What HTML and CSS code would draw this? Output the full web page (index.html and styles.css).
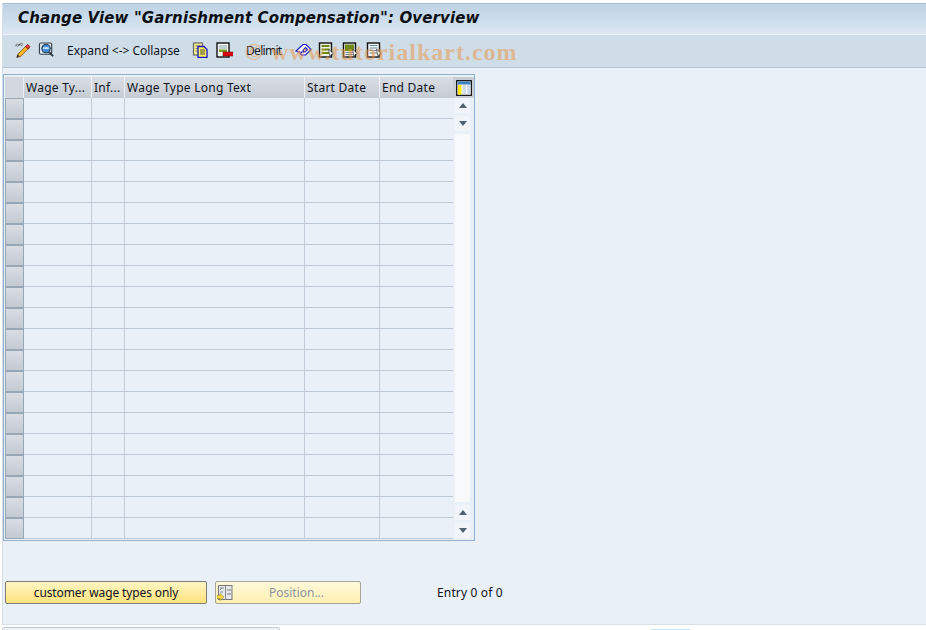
FILE: index.html
```html
<!DOCTYPE html>
<html lang="en">
<head>
<meta charset="utf-8">
<title>Change View "Garnishment Compensation": Overview</title>
<link rel="stylesheet" href="styles.css">
</head>
<body>
<div class="screen">
  <div class="window">
    <header class="titlebar"><h1 class="title">Change View "Garnishment Compensation": Overview</h1></header>
    <div class="toolbar">
      <svg class="icon" viewBox="0 0 17 17"><path d="M1 4.500l2-2 1.500 1.500 1.500-2 2 2" fill="none" stroke="#333" stroke-width="1"/><path d="M3 4.500a1.200 1.200 0 1 1 .1 0zM7 3.500a1.200 1.200 0 1 1 .1 0z" fill="#fff" stroke="#444" stroke-width=".8"/><path d="M3.500 13l9-9 3 2.500-9 9-4 1z" fill="#f7b52c" stroke="#7a4a10" stroke-width=".8"/><path d="M11.500 5l2.500-2.500 2.500 2.500-2 2.500z" fill="#e23b3b" stroke="#7a1010" stroke-width=".7"/><path d="M3.500 13l-1.500 3.500 3.500-1z" fill="#333"/></svg>
      <svg class="icon icon-gap-s" viewBox="0 0 17 17"><rect x="1" y="1" width="13" height="12" rx="1.500" fill="#dfe6ee" stroke="#33424f" stroke-width="1.200"/><circle cx="8" cy="7" r="4.500" fill="#3f8ede" stroke="#2a3a4a" stroke-width="1.100"/><path d="M5 5.500h6v2H5z" fill="#cfe6fb"/><path d="M11 10.500l4.500 4.500" stroke="#27323c" stroke-width="2"/></svg>
      <span class="tool-text tool-expand">Expand &lt;-&gt; Collapse</span>
      <svg class="icon icon-copy" viewBox="0 0 16 16"><rect x="1" y="1" width="9" height="12" fill="#f7ee8a" stroke="#666" stroke-width="1.200"/><path d="M3 4h5M3 6.500h5M3 9h5" stroke="#777"/><path d="M5.500 4.500h6l3 3v8h-9z" fill="#ffee55" stroke="#1616c8" stroke-width="1.300"/><path d="M7.500 8h5M7.500 10h5M7.500 12h5" stroke="#444"/></svg>
      <svg class="icon icon-delete" viewBox="0 0 17 16"><rect x="1" y="1" width="12" height="14" fill="#f3f3f3" stroke="#111" stroke-width="1.400"/><path d="M3 4h8M3 6h8" stroke="#8aa" stroke-width="1"/><rect x="3" y="7.500" width="8" height="2.500" fill="#7f9c1e"/><rect x="7" y="10" width="10" height="4" fill="#e00012" stroke="#600" stroke-width=".5"/></svg>
      <span class="tool-text tool-delimit">Delimit</span>
      <svg class="icon icon-undo" viewBox="0 0 17 16"><path d="M1 9l7-6.500h3l5 5-5.500 5.500h-4l-1-1.500 1.500-1.500h3l2.500-2.500-2-2-2.500 2.500 1 2h-5z" fill="#fff" stroke="#1b1bc0" stroke-width="1.200"/></svg>
      <svg class="icon icon-sel-a" viewBox="0 0 16 16"><rect x="1" y="1" width="12" height="14" fill="#eef2e6" stroke="#111" stroke-width="1.400"/><path d="M3 3h8v2H3zM3 6.500h8v2H3zM3 10h8v2H3z" fill="#6f8a14"/><path d="M10 7l5 5-2.500.5-1 2.500z" fill="#fff" stroke="#333" stroke-width=".7"/></svg>
      <svg class="icon icon-sel-b" viewBox="0 0 16 16"><rect x="1" y="1" width="12" height="14" fill="#e8eef0" stroke="#111" stroke-width="1.400"/><rect x="2.500" y="2.500" width="9" height="6.500" fill="#6f8a14"/><path d="M3 10.500h8M3 12.500h8" stroke="#6b8ba0"/><path d="M10 7l5 5-2.500.5-1 2.500z" fill="#fff" stroke="#333" stroke-width=".7"/></svg>
      <svg class="icon icon-sel-c" viewBox="0 0 16 16"><rect x="1" y="1" width="12" height="14" fill="#f2f5f7" stroke="#111" stroke-width="1.400"/><path d="M3 3.500h8M3 6h8M3 8.500h8M3 11h8" stroke="#6b8ba0" stroke-width="1.200"/><path d="M10 7l5 5-2.500.5-1 2.500z" fill="#fff" stroke="#333" stroke-width=".7"/></svg>
    </div>
    <main class="content">
      <div class="table-box">
        <div class="table-col">
          <table class="grid">
            <thead>
              <tr><th class="sel"></th><th class="c1">Wage Ty...</th><th class="c2">Inf...</th><th class="c3">Wage Type Long Text</th><th class="c4">Start Date</th><th class="c5">End Date</th></tr>
            </thead>
            <tbody>
              <tr><td class="sel"></td><td></td><td></td><td></td><td></td><td></td></tr>
              <tr><td class="sel"></td><td></td><td></td><td></td><td></td><td></td></tr>
              <tr><td class="sel"></td><td></td><td></td><td></td><td></td><td></td></tr>
              <tr><td class="sel"></td><td></td><td></td><td></td><td></td><td></td></tr>
              <tr><td class="sel"></td><td></td><td></td><td></td><td></td><td></td></tr>
              <tr><td class="sel"></td><td></td><td></td><td></td><td></td><td></td></tr>
              <tr><td class="sel"></td><td></td><td></td><td></td><td></td><td></td></tr>
              <tr><td class="sel"></td><td></td><td></td><td></td><td></td><td></td></tr>
              <tr><td class="sel"></td><td></td><td></td><td></td><td></td><td></td></tr>
              <tr><td class="sel"></td><td></td><td></td><td></td><td></td><td></td></tr>
              <tr><td class="sel"></td><td></td><td></td><td></td><td></td><td></td></tr>
              <tr><td class="sel"></td><td></td><td></td><td></td><td></td><td></td></tr>
              <tr><td class="sel"></td><td></td><td></td><td></td><td></td><td></td></tr>
              <tr><td class="sel"></td><td></td><td></td><td></td><td></td><td></td></tr>
              <tr><td class="sel"></td><td></td><td></td><td></td><td></td><td></td></tr>
              <tr><td class="sel"></td><td></td><td></td><td></td><td></td><td></td></tr>
              <tr><td class="sel"></td><td></td><td></td><td></td><td></td><td></td></tr>
              <tr><td class="sel"></td><td></td><td></td><td></td><td></td><td></td></tr>
              <tr><td class="sel"></td><td></td><td></td><td></td><td></td><td></td></tr>
              <tr><td class="sel"></td><td></td><td></td><td></td><td></td><td></td></tr>
              <tr><td class="sel"></td><td></td><td></td><td></td><td></td><td></td></tr>
            </tbody>
          </table>
        </div>
        <div class="scroll-col">
          <div class="col-config">
            <svg viewBox="0 0 16 16" class="config-icon"><rect x=".7" y=".7" width="14.600" height="14.600" fill="#fff" stroke="#111" stroke-width="1.300"/><rect x="1.500" y="1.500" width="13" height="3" fill="#3f7fc0"/><rect x="2" y="5" width="3.500" height="9.500" fill="#ffe800"/><rect x="6.500" y="5" width="3.500" height="9.500" fill="#cfdbe6"/><rect x="11" y="5" width="3.500" height="9.500" fill="#cfdbe6"/></svg>
          </div>
          <div class="scroll-btn scroll-btn-first"><span class="arrow-up"></span></div>
          <div class="scroll-btn scroll-btn-second"><span class="arrow-down"></span></div>
          <div class="scroll-track"></div>
          <div class="scroll-btn"><span class="arrow-up"></span></div>
          <div class="scroll-btn scroll-btn-second"><span class="arrow-down"></span></div>
        </div>
      </div>
      <div class="actions">
        <button class="btn btn-primary" type="button">customer wage types only</button>
        <button class="btn btn-position" type="button">
          <svg class="pos-icon" viewBox="0 0 16 16"><rect x="1.500" y=".5" width="13.500" height="14" fill="#e6e9ea" stroke="#777"/><path d="M8.500 1v13" stroke="#888"/><path d="M10 5h4M10 9h4" stroke="#777"/><path d="M3 3h4M3 5l2-2M3 7h3" stroke="#889" fill="none"/><path d="M0 10.500h3v-2l4 3.500-4 3.500v-2H0z" fill="#f7d94a" stroke="#a08010" stroke-width=".6"/></svg>
          <span class="btn-label">Position...</span>
        </button>
        <span class="entry">Entry 0 of 0</span>
      </div>
    </main>
  </div>
  <footer class="statusbar">
    <div class="status-box"></div>
    <div class="status-chip"></div>
  </footer>
  <div class="watermark">&copy; www.tutorialkart.com</div>
</div>
</body>
</html>
```
FILE: styles.css
```css
* { box-sizing: border-box; }
html, body { margin: 0; padding: 0; }
body { background: #fff; font-family: "Noto Sans", "DejaVu Sans", sans-serif; font-size: 12px; color: #10141c; }
.screen { position: relative; width: 926px; height: 630px; overflow: hidden; display: flex; flex-direction: column; padding-top: 3px; }
.window { height: 622px; flex: none; margin-left: 2px; display: flex; flex-direction: column; background: #e9f0f7; border-left: 1px solid #d5dde5; border-top: 1px solid #aebccb; border-bottom: 1px solid #d8e0e8; }
.titlebar { height: 31px; flex: none; display: flex; align-items: center; padding: 0 0 2px 15px; background: linear-gradient(#bdd2e5, #dbe7f1); border-bottom: 1px solid #eef3f8; }
.title { margin: 0; font-family: "DejaVu Sans", sans-serif; font-size: 15px; font-style: italic; font-weight: 700; letter-spacing: .13px; color: #0b0f14; white-space: nowrap; }
.toolbar { height: 33px; flex: none; display: flex; align-items: center; background: #cfdde9; border-bottom: 1px solid #b5c5d4; padding-bottom: 2px; }
.icon { width: 17px; height: 16px; flex: none; display: block; }
.toolbar .icon:first-child { margin-left: 11px; }
.icon-gap-s { margin-left: 7px; }
.tool-text { white-space: nowrap; font-size: 12px; padding-top: 1px; }
.tool-expand { margin-left: 12px; width: 125px; letter-spacing: -.03px; }
.icon-copy { margin-left: 0; }
.icon-delete { margin-left: 7px; }
.tool-delimit { margin-left: 13px; width: 49px; letter-spacing: -.7px; }
.icon-undo { margin-left: 0; }
.icon-sel-a { margin-left: 6px; }
.icon-sel-b { margin-left: 7px; }
.icon-sel-c { margin-left: 7px; }
.content { flex: 1; display: flex; flex-direction: column; padding-top: 6px; }
.table-box { width: 472px; height: 467px; display: flex; background: #e9f0f7; border: 1px solid #8fb0d0; padding: 2px 0 0 1px; }
.table-col { width: 448px; flex: none; }
.grid { border-collapse: separate; border-spacing: 0; table-layout: fixed; width: 448px; }
.grid th { height: 21px; padding: 0 0 0 1px; text-align: left; font-weight: 400; font-size: 12px; letter-spacing: .25px; white-space: nowrap; overflow: hidden; background: linear-gradient(#d9dee4, #c6ccd3); border-right: 1px solid #eef2f6; border-left: 1px solid transparent; }
.grid td { height: 21px; padding: 0; border-right: 1px solid #c3ccd8; border-bottom: 1px solid #bcc8d6; }
.grid td:last-child, .grid th:last-child { border-right: 0; }
.grid th.sel { width: 19px; background: #d3d8de; }
.grid td.sel { background: linear-gradient(#d8dde3, #c4cad2); border: 1px solid #97a7b6; width: 19px; }
.c1 { width: 68px; }
.c2 { width: 33px; }
.c3 { width: 180px; }
.c4 { width: 75px; }
.c5 { width: 73px; }
.scroll-col { width: 21px; flex: none; display: flex; flex-direction: column; align-items: center; padding-bottom: 2px; }
.col-config { width: 21px; height: 21px; background: #c9ced4; display: flex; align-items: center; justify-content: center; flex: none; }
.config-icon { width: 16px; height: 16px; display: block; }
.scroll-btn { width: 15px; height: 15px; flex: none; background: #f1f5f9; display: flex; align-items: center; justify-content: center; margin: 2px 2px 0 0; }
.scroll-btn-first { margin-top: 0; }
.scroll-btn-second { margin-top: 3px; }
.scroll-track { flex: 1; width: 15px; background: #f7f9fb; margin: 3px 2px 1px 0; }
.arrow-up { width: 0; height: 0; border-left: 4.500px solid transparent; border-right: 4.500px solid transparent; border-bottom: 5px solid #4f6270; }
.arrow-down { width: 0; height: 0; border-left: 4.500px solid transparent; border-right: 4.500px solid transparent; border-top: 5px solid #4f6270; }
.actions { display: flex; align-items: center; margin-top: 40px; padding-left: 2px; height: 23px; }
.btn { height: 23px; border-radius: 2px; font-family: inherit; font-size: 12px; padding: 0; cursor: default; }
.btn-primary { width: 202px; border: 1px solid #7d7d75; background: linear-gradient(#fff6c4, #ffe27d); color: #10141c; letter-spacing: -.12px; }
.btn-position { width: 146px; margin-left: 8px; border: 1px solid #a5a59a; background: linear-gradient(#fff9d9, #ffefb2); display: flex; align-items: center; color: #8b95a0; }
.pos-icon { width: 16px; height: 16px; flex: none; margin-left: 1px; }
.btn-label { flex: 1; text-align: center; }
.entry { margin-left: 76px; white-space: nowrap; letter-spacing: .15px; }
.statusbar { flex: 1; position: relative; }
.status-box { position: absolute; left: 2px; top: 2px; width: 278px; height: 10px; background: #eef3f8; border: 1px solid #c5cbd4; border-radius: 2px; }
.status-chip { position: absolute; left: 651px; top: 4px; width: 39px; height: 8px; background: #c8e4f4; }
.watermark { position: absolute; left: 245px; top: 39px; font-family: "Liberation Serif", serif; font-size: 24px; font-weight: 700; letter-spacing: 1px; color: rgba(232, 150, 70, .55); white-space: nowrap; pointer-events: none; }
```
